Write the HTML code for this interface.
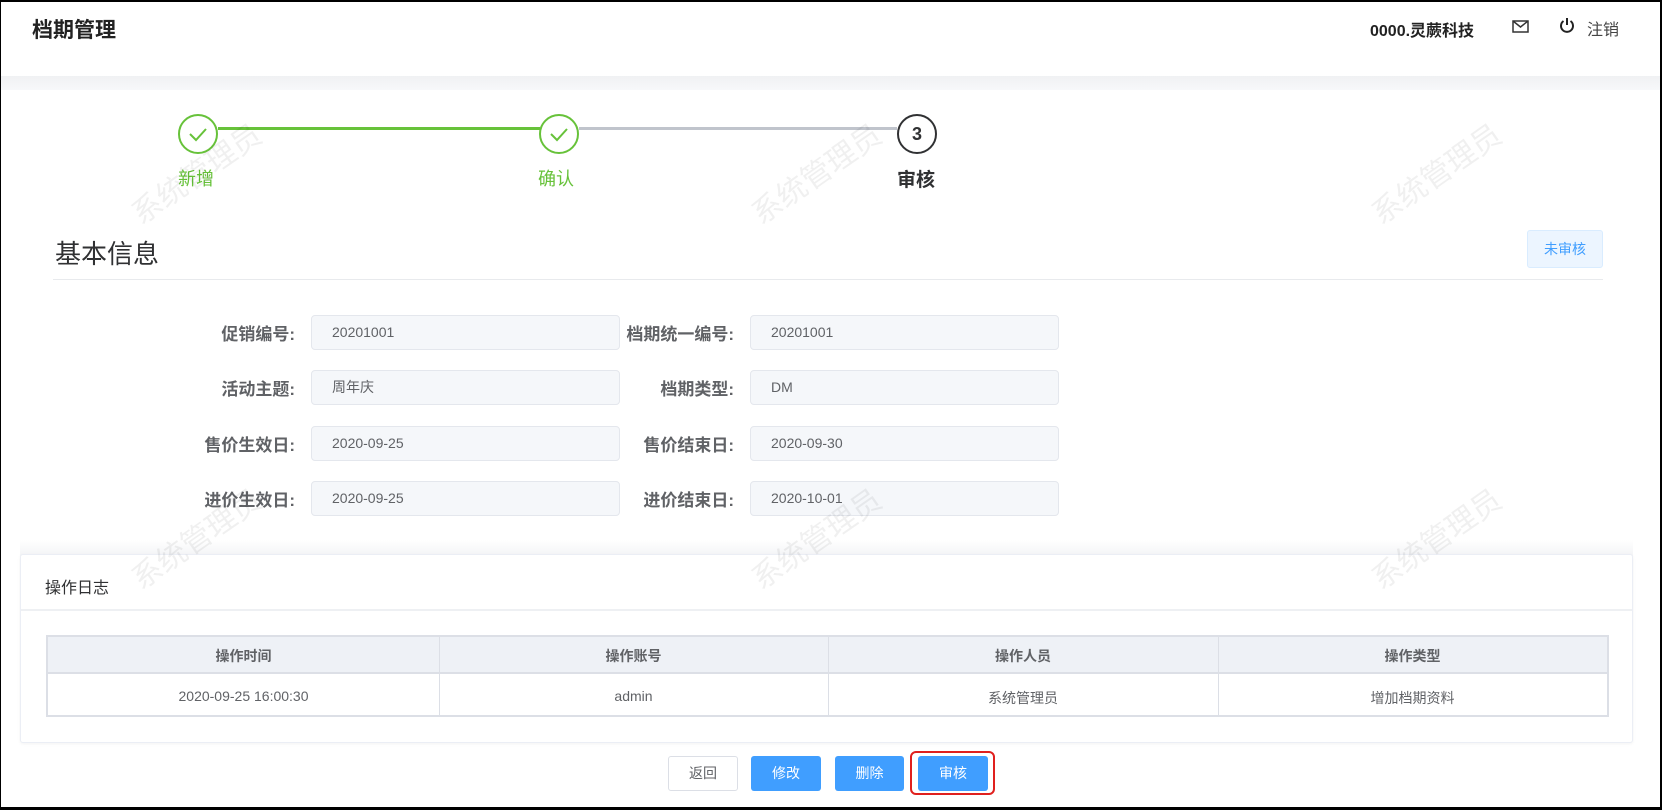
<!DOCTYPE html>
<html><head><meta charset="utf-8">
<style>
*{box-sizing:border-box;margin:0;padding:0}
body{width:1662px;height:810px;position:relative;overflow:hidden;background:#fff;font-family:"Liberation Sans","Noto Sans CJK SC",sans-serif;color:#303133}
.abs{position:absolute}
.frame{position:absolute;left:0;top:0;width:1662px;height:810px;border-top:2px solid #000;border-left:1px solid #000;border-right:2px solid #000;border-bottom:3px solid #000;pointer-events:none;z-index:10}
.wm{position:absolute;font-size:30px;color:rgba(0,0,0,0.06);transform:rotate(-35deg);white-space:nowrap;z-index:5}
.circ{position:absolute;width:40px;height:40px;border-radius:50%;border:2px solid #67c23a;background:#fff}
.lbl{position:absolute;font-size:17px;font-weight:bold;color:#606266;text-align:right;width:200px}
.inp{position:absolute;width:309px;height:35px;background:#f5f7fa;border:1px solid #e4e7ed;border-radius:4px;font-size:14px;color:#606266;padding-left:20px;line-height:33px}
.th,.td{position:absolute;text-align:center;font-size:14px;color:#606266}
.btn{position:absolute;top:756px;height:35px;border-radius:3px;font-size:14px;line-height:35px;text-align:center;color:#fff;background:#409eff}
</style></head><body>
<div class="frame"></div>
<div class="abs" style="left:32px;top:14px;font-size:21px;font-weight:bold;color:#222">档期管理</div>
<div class="abs" style="left:1370px;top:17px;font-size:16px;font-weight:bold;color:#222">0000.灵蕨科技</div>
<svg class="abs" style="left:1512px;top:19px" width="17" height="15" viewBox="0 0 17 15"><rect x="1" y="2" width="15" height="11" fill="none" stroke="#333" stroke-width="1.5"/><path d="M1 2l7.5 6 7.5-6" fill="none" stroke="#333" stroke-width="1.5"/></svg>
<svg class="abs" style="left:1559px;top:16px" width="16" height="18" viewBox="0 0 16 18"><path d="M4.5 5a6 6 0 1 0 7 0" fill="none" stroke="#222" stroke-width="2"/><path d="M8 2v7" stroke="#222" stroke-width="2"/></svg>
<div class="abs" style="left:1587px;top:16px;font-size:16px;color:#444">注销</div>
<div class="abs" style="left:0;top:76px;width:1662px;height:14px;background:linear-gradient(#f0f1f3,#f7f8fa)"></div>

<div class="wm" style="left:120px;top:150px">系统管理员</div>
<div class="wm" style="left:740px;top:150px">系统管理员</div>
<div class="wm" style="left:1360px;top:150px">系统管理员</div>
<div class="wm" style="left:120px;top:515px">系统管理员</div>
<div class="wm" style="left:740px;top:515px">系统管理员</div>
<div class="wm" style="left:1360px;top:515px">系统管理员</div>

<div class="abs" style="left:218px;top:127px;width:322px;height:3px;background:#67c23a"></div>
<div class="abs" style="left:579px;top:127px;width:318px;height:3px;background:#c0c4cc"></div>
<div class="circ" style="left:178px;top:114px"><svg width="36" height="36" viewBox="0 0 36 36"><path d="M10 18l6 6 10-11" fill="none" stroke="#67c23a" stroke-width="2"/></svg></div>
<div class="circ" style="left:539px;top:114px"><svg width="36" height="36" viewBox="0 0 36 36"><path d="M10 18l6 6 10-11" fill="none" stroke="#67c23a" stroke-width="2"/></svg></div>
<div class="circ" style="left:897px;top:114px;border-color:#303133;text-align:center;line-height:36px;font-size:18px;font-weight:bold">3</div>
<div class="abs" style="left:178px;top:165px;font-size:18px;color:#67c23a">新增</div>
<div class="abs" style="left:538px;top:165px;font-size:18px;color:#67c23a">确认</div>
<div class="abs" style="left:897px;top:165px;font-size:19px;font-weight:bold;color:#303133">审核</div>

<div class="abs" style="left:55px;top:234px;font-size:26px;color:#303133">基本信息</div>
<div class="abs" style="left:1527px;top:230px;width:76px;height:38px;background:#ecf5ff;border:1px solid #d9ecff;border-radius:3px;color:#409eff;font-size:14px;text-align:center;line-height:36px">未审核</div>
<div class="abs" style="left:53px;top:279px;width:1550px;height:1px;background:#e8eaed"></div>

<div class="lbl" style="left:95px;top:320px">促销编号:</div><div class="inp" style="left:311px;top:315px">20201001</div>
<div class="lbl" style="left:534px;top:320px">档期统一编号:</div><div class="inp" style="left:750px;top:315px">20201001</div>
<div class="lbl" style="left:95px;top:375px">活动主题:</div><div class="inp" style="left:311px;top:370px">周年庆</div>
<div class="lbl" style="left:534px;top:375px">档期类型:</div><div class="inp" style="left:750px;top:370px">DM</div>
<div class="lbl" style="left:95px;top:431px">售价生效日:</div><div class="inp" style="left:311px;top:426px">2020-09-25</div>
<div class="lbl" style="left:534px;top:431px">售价结束日:</div><div class="inp" style="left:750px;top:426px">2020-09-30</div>
<div class="lbl" style="left:95px;top:486px">进价生效日:</div><div class="inp" style="left:311px;top:481px">2020-09-25</div>
<div class="lbl" style="left:534px;top:486px">进价结束日:</div><div class="inp" style="left:750px;top:481px">2020-10-01</div>

<div class="abs" style="left:20px;top:540px;width:1613px;height:16px;background:linear-gradient(rgba(255,255,255,0),#f3f4f6)"></div>
<div class="abs" style="left:20px;top:554px;width:1613px;height:189px;border:1px solid #ebeef5;border-radius:3px;background:#fff;box-shadow:0 1px 3px rgba(0,0,0,0.05)"></div>
<div class="abs" style="left:45px;top:574px;font-size:16px;color:#303133">操作日志</div>
<div class="abs" style="left:21px;top:609px;width:1611px;height:2px;background:#eef0f3"></div>

<div class="abs" style="left:46px;top:635px;width:1563px;height:82px;border:2px solid #dcdfe6"></div>
<div class="abs" style="left:48px;top:637px;width:1559px;height:37px;background:#eef1f6;border-bottom:2px solid #dcdfe6"></div>
<div class="abs" style="left:439px;top:637px;width:1px;height:78px;background:#dcdfe6"></div>
<div class="abs" style="left:828px;top:637px;width:1px;height:78px;background:#dcdfe6"></div>
<div class="abs" style="left:1218px;top:637px;width:1px;height:78px;background:#dcdfe6"></div>
<div class="th" style="left:48px;top:646px;width:391px;font-weight:bold">操作时间</div>
<div class="th" style="left:439px;top:646px;width:389px;font-weight:bold">操作账号</div>
<div class="th" style="left:828px;top:646px;width:390px;font-weight:bold">操作人员</div>
<div class="th" style="left:1218px;top:646px;width:389px;font-weight:bold">操作类型</div>
<div class="td" style="left:48px;top:688px;width:391px">2020-09-25 16:00:30</div>
<div class="td" style="left:439px;top:688px;width:389px">admin</div>
<div class="td" style="left:828px;top:688px;width:390px">系统管理员</div>
<div class="td" style="left:1218px;top:688px;width:389px">增加档期资料</div>

<div class="btn" style="left:668px;width:70px;background:#fff;border:1px solid #dcdfe6;color:#606266;line-height:33px">返回</div>
<div class="btn" style="left:751px;width:70px">修改</div>
<div class="btn" style="left:835px;width:69px">删除</div>
<div class="abs" style="left:910px;top:751px;width:85px;height:44px;border:2px solid #e0201e;border-radius:6px"></div>
<div class="btn" style="left:918px;width:70px">审核</div>
</body></html>
